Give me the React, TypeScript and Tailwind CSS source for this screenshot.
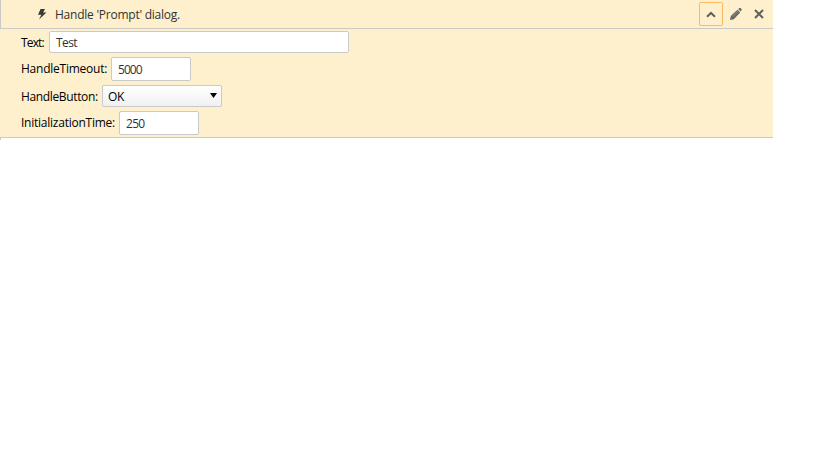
import type { ReactNode } from 'react';

function Label({ className, children }: { className: string; children: ReactNode }) {
  return <label className={`shrink-0 whitespace-nowrap text-black ${className}`}>{children}</label>;
}

function Field({ value, className }: { value: string; className: string }) {
  return (
    <div className={`flex items-center rounded-xs border border-[#c9cacc] bg-white pl-1.5 text-[#333] ${className}`}>
      <span className="pt-0.5">{value}</span>
    </div>
  );
}

function StepHeader() {
  return (
    <div className="flex h-[29px] items-center border-b border-l border-[#c9c9c7] pr-[9px] text-[#333]">
      <svg className="ml-9 h-3 w-2.5" viewBox="0 0 10 12" fill="#3a3a3a">
        <path d="M3.500 1H8L6.200 4.600H9.500L2 11.500 4.300 6.800H1L3.500 1Z" />
      </svg>
      <span className="ml-2 flex-1 pt-0.5 tracking-[-0.02em]">Handle 'Prompt' dialog.</span>
      <button className="flex h-6 w-6 items-center justify-center rounded-xs border border-[#fdb95d]">
        <svg className="h-2 w-2.5" viewBox="0 0 10 8" fill="none" stroke="#606060" strokeWidth="2">
          <path d="M1 6.700 5 2.900l4 3.800" />
        </svg>
      </button>
      <svg className="ml-[7px] h-3 w-3" viewBox="0 0 12 12" fill="#666">
        <path d="M0 12l.8-4 6.700-6.200 2.700 2.700L3.800 11.200 0 12Z" />
        <path d="M8.200 1.100 9.200.2c.6-.5 1.200-.3 1.800.2s1 1.300.5 1.900l-.8 1.200-2.500-2.400Z" />
        <path d="M2.500 8.700 8 3.300" stroke="#a9a08d" strokeWidth=".8" />
      </svg>
      <svg className="ml-3 h-2.5 w-2.5" viewBox="0 0 10 10" fill="none" stroke="#606060" strokeWidth="2">
        <path d="m1 1 8 8M9 1 1 9" />
      </svg>
    </div>
  );
}

export default function App() {
  return (
    <div className="h-[460px] w-full bg-white font-['Open_Sans','Noto_Sans',sans-serif] text-[12px] leading-4">
      <div className="w-[773px] bg-[#fef0cd]">
        <StepHeader />
        <div className="flex h-[109px] flex-col border-b border-[#c9c9c7] pt-0.5 pl-[21px]">
          <div className="flex h-[22px] items-center">
            <Label className="w-7 pt-0.5 tracking-[-0.07em]">Text:</Label>
            <Field value="Test" className="h-[22px] w-[300px] tracking-[-0.05em]" />
          </div>
          <div className="mt-1 flex h-6 items-center">
            <Label className="w-[90px] tracking-[-0.02em]">HandleTimeout:</Label>
            <Field value="5000" className="h-6 w-20 tracking-[-0.08em]" />
          </div>
          <div className="mt-1 flex h-[22px] items-center">
            <Label className="w-[81px] pt-0.5 tracking-[-0.03em]">HandleButton:</Label>
            <div className="flex h-[22px] w-[120px] items-center justify-between rounded-xs border border-[#c9cacc] bg-linear-to-b from-white to-[#f0f0f0] pr-1 pl-[5px] text-black">
              <span className="pt-0.5 tracking-[-0.03em]">OK</span>
              <svg className="mb-0.5 h-[5px] w-[7px]" viewBox="0 0 7 5">
                <path d="M0 0h7L3.500 5Z" />
              </svg>
            </div>
          </div>
          <div className="mt-1 flex h-6 items-center">
            <Label className="w-[98px] tracking-[-0.02em]">InitializationTime:</Label>
            <Field value="250" className="h-6 w-20 tracking-[-0.06em]" />
          </div>
        </div>
      </div>
      <div className="h-0.5 border-l border-[#c9c9c7]" />
    </div>
  );
}
